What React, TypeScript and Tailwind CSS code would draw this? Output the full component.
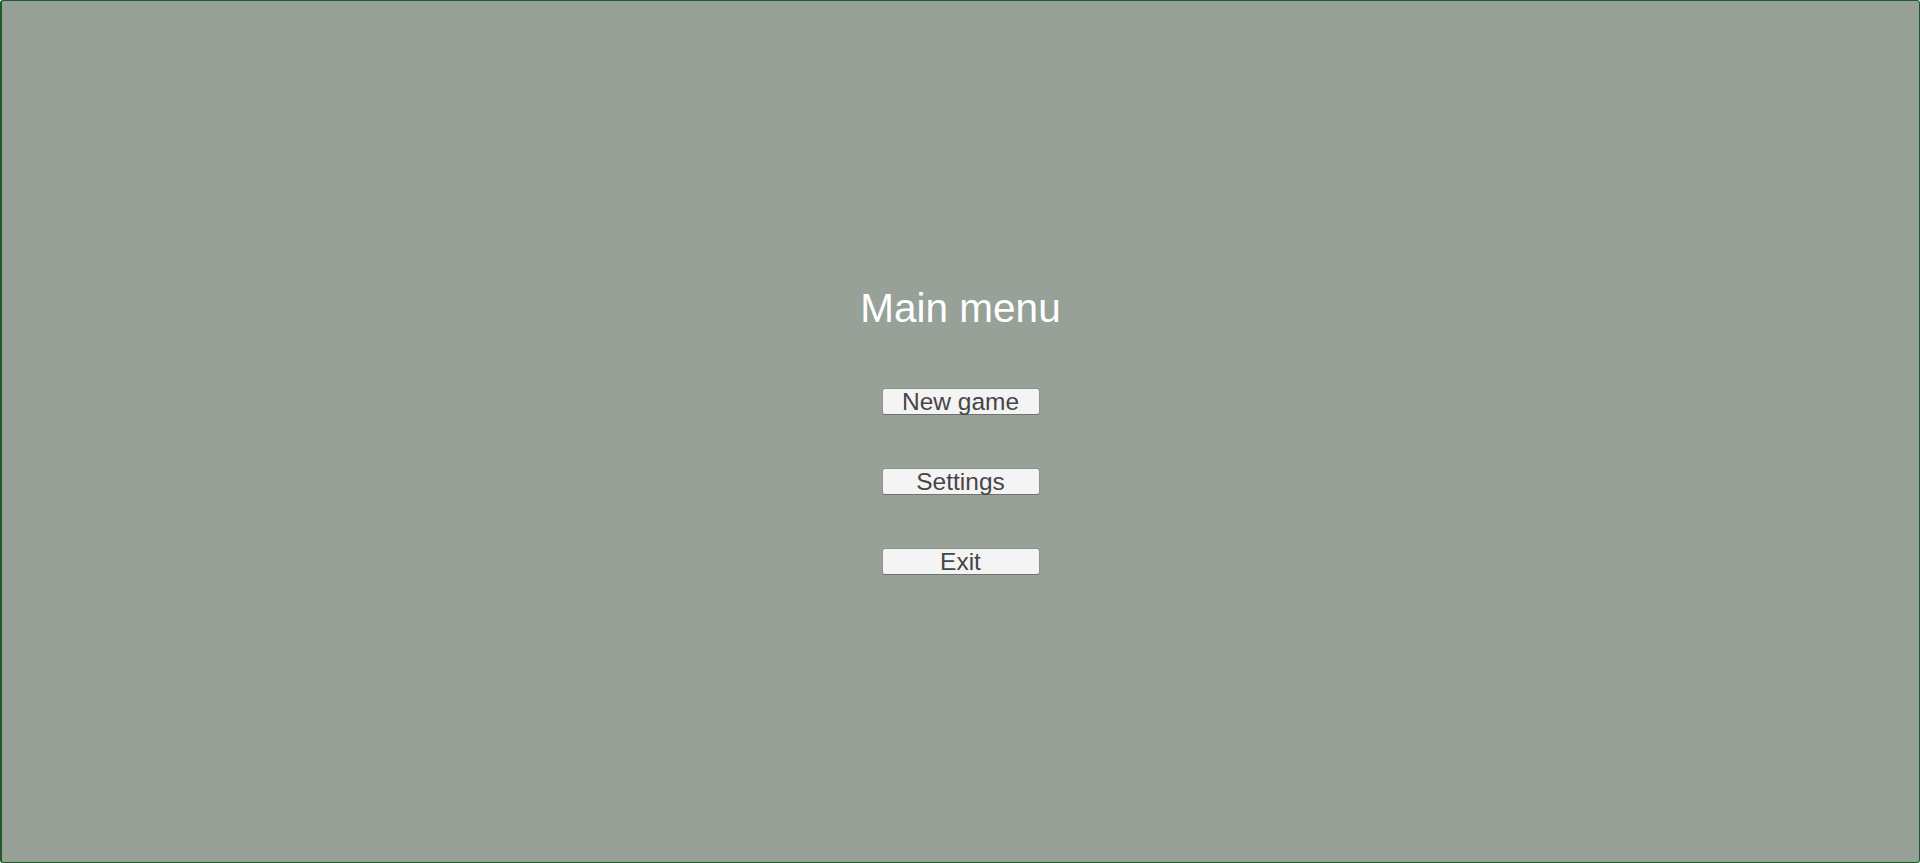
import React from 'react';

const MenuButton: React.FC<{ label: string }> = ({ label }) => (
  <button
    type="button"
    className="w-[158px] h-[27px] rounded-[3px] border border-[#8c918c] border-b-[#6f746f] bg-[#f4f4f4] text-[24.5px] leading-[25px] text-[#464646]"
  >
    {label}
  </button>
);

const App: React.FC = () => {
  return (
    <div className="h-[863px] w-full overflow-hidden rounded-[3px] border border-l-2 border-[#1f5a2a] bg-[#97a197] font-['Liberation_Sans',Arial,sans-serif]">
      <div className="flex flex-col items-center pt-[287px]">
        <h1 className="h-[40px] text-[40.5px] leading-[40px] text-white">Main menu</h1>
        <div className="mt-[60px] flex flex-col items-center gap-[53px]">
          <MenuButton label="New game" />
          <MenuButton label="Settings" />
          <MenuButton label="Exit" />
        </div>
      </div>
    </div>
  );
};

export default App;
